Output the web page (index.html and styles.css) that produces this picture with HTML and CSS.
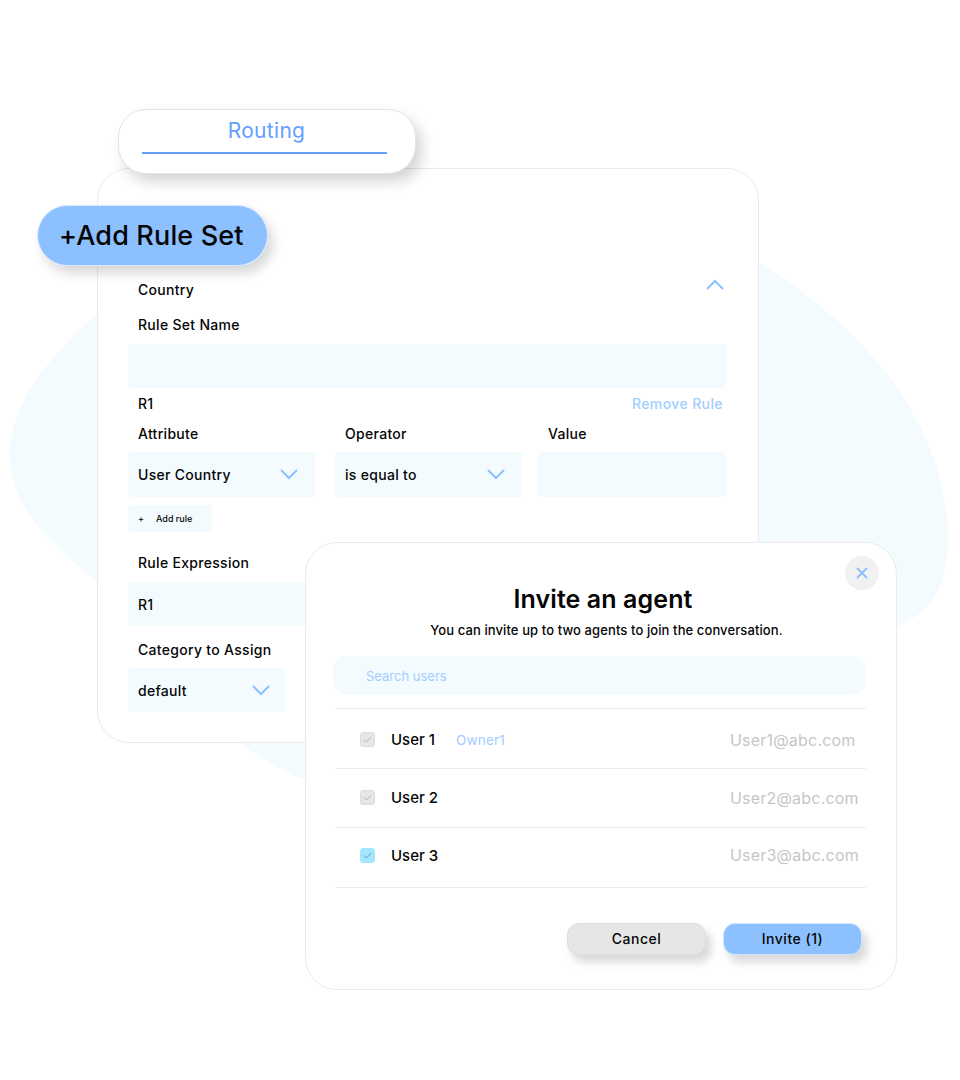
FILE: index.html
```html
<!DOCTYPE html>
<html lang="en">
<head>
    <meta charset="UTF-8">
    <meta name="viewport" content="width=device-width, initial-scale=1.0">
    <title>Routing</title>
    <link rel="stylesheet" href="styles.css">
</head>
<body>
    <div class="stage">
        <svg class="blob" width="960" height="1080" viewBox="0 0 960 1080">
            <path d="M97 313C40 365 10 410 10 453C10 510 50 540 97 583L238 742C262 760 285 772 305 780L896 627C935 612 948 580 948 540C948 405 835 308 759 263C650 190 200 220 97 313Z"/>
        </svg>

        <div class="panel rules">
            <div class="row label">
                <span>Country</span>
                <svg class="chevron up" width="18" height="11" viewBox="0 0 18 11"><path d="M1 10L9 2L17 10"/></svg>
            </div>
            <div class="label name-label">Rule Set Name</div>
            <div class="field"></div>
            <div class="row label rule-row">
                <span>R1</span>
                <span class="remove">Remove Rule</span>
            </div>
            <div class="columns">
                <div class="column">
                    <div class="label">Attribute</div>
                    <div class="field select">User Country
                        <svg class="chevron" width="18" height="11" viewBox="0 0 18 11"><path d="M1 1L9 9L17 1"/></svg>
                    </div>
                </div>
                <div class="column">
                    <div class="label">Operator</div>
                    <div class="field select">is equal to
                        <svg class="chevron" width="18" height="11" viewBox="0 0 18 11"><path d="M1 1L9 9L17 1"/></svg>
                    </div>
                </div>
                <div class="column">
                    <div class="label">Value</div>
                    <div class="field"></div>
                </div>
            </div>
            <div class="add-rule"><span>+</span><span>Add rule</span></div>
            <div class="label expr-label">Rule Expression</div>
            <div class="field select">R1</div>
            <div class="label category-label">Category to Assign</div>
            <div class="field select category">default
                <svg class="chevron" width="18" height="11" viewBox="0 0 18 11"><path d="M1 1L9 9L17 1"/></svg>
            </div>
        </div>

        <div class="tab">
            <div class="tab-title">Routing</div>
            <div class="tab-line"></div>
        </div>

        <div class="add-set">+Add Rule Set</div>

        <div class="panel invite">
            <div class="close">
                <svg width="12" height="12" viewBox="0 0 12 12"><path d="M1 1L11 11M11 1L1 11"/></svg>
            </div>
            <h1>Invite an agent</h1>
            <p>You can invite up to two agents to join the conversation.</p>
            <div class="search">Search users</div>
            <div class="users">
                <div class="user">
                    <span class="check"><svg width="9" height="7" viewBox="0 0 9 7"><path d="M1 3.5L3.5 6L8 1"/></svg></span>
                    <span class="user-name">User 1</span>
                    <span class="owner">Owner1</span>
                    <span class="email">User1@abc.com</span>
                </div>
                <div class="user">
                    <span class="check"><svg width="9" height="7" viewBox="0 0 9 7"><path d="M1 3.5L3.5 6L8 1"/></svg></span>
                    <span class="user-name">User 2</span>
                    <span class="email">User2@abc.com</span>
                </div>
                <div class="user">
                    <span class="check on"><svg width="9" height="7" viewBox="0 0 9 7"><path d="M1 3.5L3.5 6L8 1"/></svg></span>
                    <span class="user-name">User 3</span>
                    <span class="email">User3@abc.com</span>
                </div>
            </div>
            <div class="actions">
                <button class="btn cancel">Cancel</button>
                <button class="btn primary">Invite (1)</button>
            </div>
        </div>
    </div>
</body>
</html>
```

FILE: styles.css
```css
:root {
    --blue: #8cc0ff;
    --field: #f3fbff;
    --line: #ebebeb;
    --text: #050505;
}

* {
    box-sizing: border-box;
    margin: 0;
    padding: 0;
    font-family: 'Inter', 'Noto Sans', sans-serif;
}

body {
    background-color: #fff;
    color: var(--text);
}

.stage {
    position: relative;
    width: 960px;
    height: 1080px;
    overflow: hidden;
}

.blob {
    position: absolute;
    left: 0;
    top: 0;
}

.blob path {
    fill: var(--field);
}

.panel {
    position: absolute;
    background-color: #fff;
    border: 1px solid var(--line);
    border-radius: 32px;
}

/* rule set panel */
.rules {
    left: 97px;
    top: 168px;
    width: 662px;
    height: 575px;
    padding: 111px 32px 0 30px;
}

.label {
    height: 20px;
    line-height: 20px;
    padding-left: 10px;
    font-size: 14px;
    font-weight: 500;
    letter-spacing: 0.3px;
}

.row {
    display: flex;
    justify-content: space-between;
    align-items: center;
}

.name-label {
    margin-top: 15px;
    margin-bottom: 9px;
}

.field {
    height: 44px;
    background-color: var(--field);
    border-radius: 3px;
}

.select {
    display: flex;
    align-items: center;
    justify-content: space-between;
    padding: 0 17px 0 10px;
    font-size: 14px;
    font-weight: 500;
    letter-spacing: 0.3px;
}

.chevron path {
    fill: none;
    stroke: var(--blue);
    stroke-width: 2;
}

.chevron.up {
    margin-right: 2px;
    margin-top: -12px;
}

.rule-row {
    margin-top: 6px;
    margin-bottom: 10px;
}

.remove {
    padding-right: 3px;
    color: #a3cdff;
    font-size: 14px;
    letter-spacing: 0.4px;
}

.columns {
    display: grid;
    grid-template-columns: 187px 187px 188px;
    column-gap: 20px;
}

.columns .label {
    margin-bottom: 8px;
}

.columns .field {
    height: 45px;
}

.column:last-child {
    margin-left: -4px;
    width: 188px;
}

.add-rule {
    display: flex;
    align-items: center;
    gap: 12px;
    width: 84px;
    height: 27px;
    margin-top: 8px;
    padding-left: 10px;
    background-color: var(--field);
    border-radius: 3px;
    font-size: 9px;
    font-weight: 500;
}

.expr-label {
    margin-top: 21px;
    margin-bottom: 9px;
}

.category-label {
    margin-top: 14px;
    margin-bottom: 8px;
}

.category {
    width: 157px;
    padding-right: 15px;
}

/* things on top of the panel */
.tab {
    position: absolute;
    left: 118px;
    top: 109px;
    width: 298px;
    height: 65px;
    padding: 8px 28px 0 23px;
    background-color: #fff;
    border: 1px solid #e4e4e4;
    border-radius: 28px;
    box-shadow: 6px 8px 14px rgba(0, 0, 0, 0.17);
}

.tab-title {
    height: 27px;
    line-height: 26px;
    padding-left: 4px;
    text-align: center;
    color: #639fff;
    font-size: 21px;
    letter-spacing: 0.3px;
}

.tab-line {
    height: 2px;
    margin-top: 7px;
    background-color: #639fff;
}

.add-set {
    position: absolute;
    left: 37px;
    top: 205px;
    width: 231px;
    height: 61px;
    padding-left: 21px;
    line-height: 60px;
    background-color: rgba(131, 187, 255, 0.92);
    border: 1px solid #d8e9ff;
    border-radius: 31px;
    box-shadow: 5px 7px 12px rgba(0, 0, 0, 0.16);
    font-size: 27px;
    font-weight: 500;
    letter-spacing: 0.15px;
}

/* invite dialog */
.invite {
    left: 305px;
    top: 542px;
    width: 592px;
    height: 448px;
    padding: 40px 30px 0 29px;
}

.close {
    position: absolute;
    right: 17px;
    top: 13px;
    display: flex;
    align-items: center;
    justify-content: center;
    width: 34px;
    height: 34px;
    background-color: #f1f1f1;
    border-radius: 50%;
}

.close path {
    fill: none;
    stroke: var(--blue);
    stroke-width: 1.8;
}

.invite h1 {
    height: 32px;
    line-height: 32px;
    padding-left: 5px;
    text-align: center;
    font-size: 25px;
    font-weight: 600;
    letter-spacing: 0.1px;
}

.invite p {
    margin-top: 5px;
    height: 20px;
    line-height: 20px;
    padding-left: 12px;
    text-align: center;
    font-size: 13px;
    font-weight: 500;
    letter-spacing: 0.1px;
}

.search {
    height: 39px;
    line-height: 41px;
    margin-top: 16px;
    margin-left: -2px;
    padding-left: 33px;
    background-color: var(--field);
    border-radius: 14px;
    color: #a3cdff;
    font-size: 13px;
}

.users {
    margin-top: 13px;
    border-top: 1px solid var(--line);
}

.user {
    display: flex;
    align-items: center;
    height: 59.5px;
    padding: 0 7px 0 25px;
    border-bottom: 1px solid var(--line);
}

.user:first-child {
    padding-top: 3px;
}

.user:last-child {
    padding-bottom: 4px;
}

.check {
    display: flex;
    align-items: center;
    justify-content: center;
    width: 15px;
    height: 15px;
    background-color: #e6e6e6;
    border: 1px solid #dcdcdc;
    border-radius: 3px;
}

.check path {
    fill: none;
    stroke: #b4b4b4;
    stroke-width: 1;
}

.check.on {
    background-color: #a5e6ff;
    border-color: #a5e6ff;
}

.check.on path {
    stroke: #5f9fc0;
}

.user-name {
    margin-left: 16px;
    font-size: 15px;
    font-weight: 500;
}

.owner {
    margin-left: 21px;
    color: #a3cdff;
    font-size: 13.5px;
    letter-spacing: 0.2px;
}

.email {
    width: 129px;
    margin-left: auto;
    white-space: nowrap;
    color: #c6c6c6;
    font-size: 16px;
    letter-spacing: 0.2px;
}

.actions {
    display: flex;
    justify-content: flex-end;
    gap: 17px;
    margin-top: 35px;
    padding-right: 4px;
}

.btn {
    width: 139px;
    height: 32px;
    border-radius: 12px;
    color: var(--text);
    font-size: 14px;
    font-weight: 500;
    letter-spacing: 0.5px;
    box-shadow: 5px 7px 10px rgba(0, 0, 0, 0.16);
}

.cancel {
    background-color: #e6e6e6;
    border: 1px solid #dedede;
}

.primary {
    background-color: var(--blue);
    border: 1px solid #d4e6ff;
}
```
